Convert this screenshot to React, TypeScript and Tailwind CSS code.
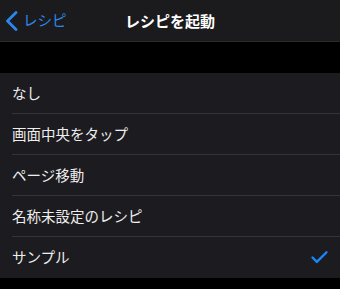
import { Check } from "lucide-react";

const items = ["なし", "画面中央をタップ", "ページ移動", "名称未設定のレシピ", "サンプル"];

const font = {
  fontFamily: '"Noto Sans CJK JP", "Noto Sans", sans-serif',
};

const App = () => {
  const selected = "サンプル";

  return (
    <div className="w-[340px] h-[289px] bg-black overflow-hidden" style={font}>
      <div className="relative h-[42px] bg-[#1b1a1d] border-b border-[#2a292c] flex items-center justify-center">
        <div className="absolute left-[5px] top-0 h-full flex items-center text-[#2d87ea]">
          <svg width="13" height="20" viewBox="0 0 13 20" fill="none">
            <path
              d="M11 1.5 L2.5 10 L11 18.5"
              stroke="currentColor"
              strokeWidth="2.8"
              strokeLinecap="round"
              strokeLinejoin="round"
            />
          </svg>
          <span className="ml-[5px] text-[14.5px] leading-none">レシピ</span>
        </div>
        <h1 className="text-[15px] font-bold text-white leading-none">レシピを起動</h1>
      </div>

      <div className="h-[31px]" />

      <ul className="bg-[#1c1b1f]">
        {items.map((item, i) => (
          <li key={item} className="pl-[12px]">
            <div
              className={
                "h-[41px] flex items-center justify-between pr-[10px] " +
                (i < items.length - 1 ? "border-b border-[#343336]" : "")
              }
            >
              <span className="text-[14.5px] text-[#eeeeee] leading-none">{item}</span>
              {item === selected && (
                <Check color="#1a86f4" strokeWidth={2.8} className="w-[21px] h-[21px]" />
              )}
            </div>
          </li>
        ))}
      </ul>
    </div>
  );
};

export default App;
